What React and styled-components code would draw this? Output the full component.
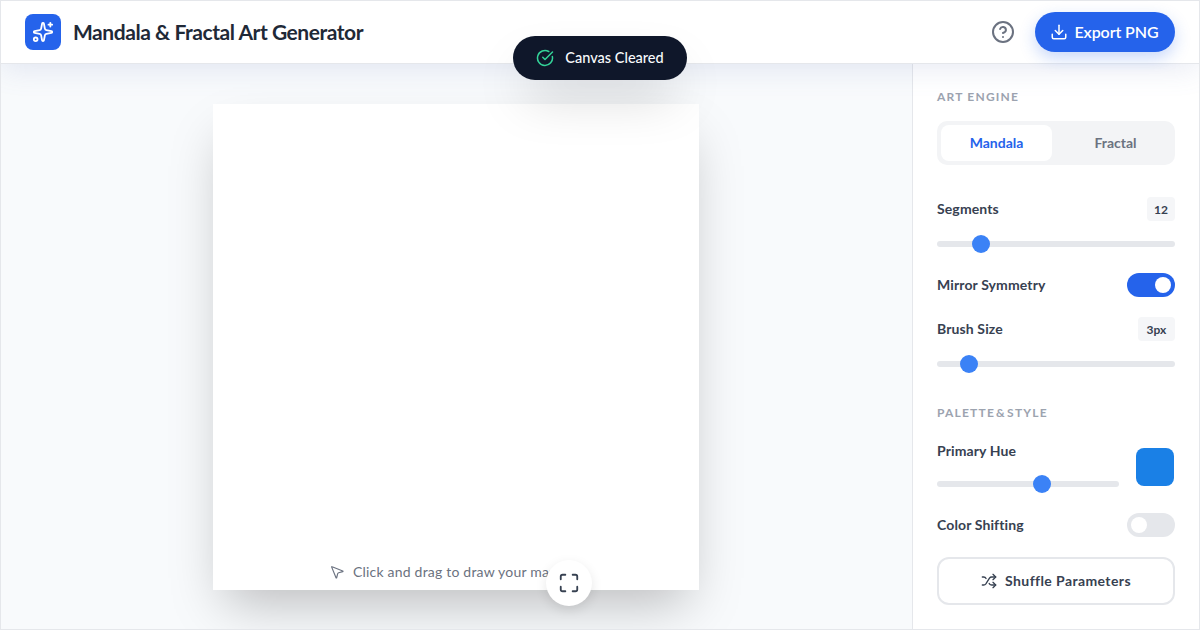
import React from 'react'
import styled, { createGlobalStyle } from 'styled-components'
import { Sparkles, CircleHelp, Download, CircleCheckBig, MousePointer2, Maximize, Shuffle } from 'lucide-react'

const Global = createGlobalStyle`
  * { box-sizing: border-box; }
  html, body { margin: 0; padding: 0; }
  body { font-family: "Lato", "Noto Sans", sans-serif; background: #f8fafc; }
`

function Slider({ at }) {
  return (
    <Track>
      <Thumb $at={at} />
    </Track>
  )
}

function App() {
  return (
    <Page>
      <Global />
      <Header>
        <Brand>
          <LogoMark><Sparkles size={22} strokeWidth={2} /></LogoMark>
          <Title>Mandala &amp; Fractal Art Generator</Title>
        </Brand>
        <Actions>
          <HelpButton><CircleHelp size={24} strokeWidth={2} /></HelpButton>
          <ExportButton><Download size={18} strokeWidth={2} /><ButtonText>Export PNG</ButtonText></ExportButton>
        </Actions>
      </Header>

      <Toast>
        <CircleCheckBig size={18} strokeWidth={2} color="#34d399" />
        <ButtonText>Canvas Cleared</ButtonText>
      </Toast>

      <Body>
        <Stage>
          <Canvas>
            <Hint><MousePointer2 size={16} strokeWidth={1.75} />Click and drag to draw your mandala</Hint>
            <ExpandButton><Maximize size={22} strokeWidth={2} /></ExpandButton>
          </Canvas>
        </Stage>

        <Panel>
          <SectionLabel>ART ENGINE</SectionLabel>
          <Tabs>
            <Tab $active>Mandala</Tab>
            <Tab>Fractal</Tab>
          </Tabs>

          <Row $top={32}>
            <Label>Segments</Label>
            <Badge $w={28}>12</Badge>
          </Row>
          <SliderWrap $top={20}><Slider at={44} /></SliderWrap>

          <Row $top={26}>
            <Label>Mirror Symmetry</Label>
            <Toggle $on><Knob $on /></Toggle>
          </Row>

          <Row $top={20}>
            <Label>Brush Size</Label>
            <Badge $w={37}>3px</Badge>
          </Row>
          <SliderWrap $top={20}><Slider at={32} /></SliderWrap>

          <SectionLabel $top={38} $tight>PALETTE &amp; STYLE</SectionLabel>

          <HueRow>
            <HueControls>
              <Label>Primary Hue</Label>
              <Slider at={105} />
            </HueControls>
            <Swatch />
          </HueRow>

          <Row $top={26}>
            <Label>Color Shifting</Label>
            <Toggle><Knob /></Toggle>
          </Row>

          <ShuffleButton><Shuffle size={16} strokeWidth={2} /><ButtonText>Shuffle Parameters</ButtonText></ShuffleButton>
        </Panel>
      </Body>
    </Page>
  )
}

export default App

const Page = styled.div`
  position: relative;
  width: 1200px;
  height: 630px;
  overflow: hidden;
  display: flex;
  flex-direction: column;
  background: #f8fafc;
  border: 1px solid #e5e7eb;
`

const Header = styled.header`
  position: relative;
  z-index: 2;
  height: 63px;
  flex: none;
  display: flex;
  align-items: center;
  justify-content: space-between;
  padding: 0 24px;
  background: #fff;
  border-bottom: 1px solid #e5e7eb;
  box-shadow: 0 4px 30px rgba(100, 116, 180, 0.16);
`

const Brand = styled.div`
  display: flex;
  align-items: center;
  gap: 12px;
`

const LogoMark = styled.div`
  width: 36px;
  height: 36px;
  border-radius: 8px;
  background: #2563eb;
  color: #fff;
  display: flex;
  align-items: center;
  justify-content: center;
`

const Title = styled.h1`
  margin: 0 0 2px;
  font-size: 21px;
  font-weight: 700;
  color: #1f2937;
  letter-spacing: -0.45px;
`

const Actions = styled.div`
  display: flex;
  align-items: center;
  gap: 10px;
`

const HelpButton = styled.div`
  width: 44px;
  height: 44px;
  display: flex;
  align-items: center;
  justify-content: center;
  color: #6b7280;
`

const ButtonText = styled.span`
  margin-bottom: 2px;
`

const ExportButton = styled.div`
  height: 40px;
  width: 140px;
  padding-right: 2px;
  border-radius: 20px;
  background: #2563eb;
  color: #fff;
  font-size: 16px;
  font-weight: 600;
  letter-spacing: -0.1px;
  display: flex;
  align-items: center;
  justify-content: center;
  gap: 7px;
  box-shadow: 0 6px 16px rgba(37, 99, 235, 0.25);
`

const Toast = styled.div`
  position: absolute;
  z-index: 5;
  top: 35px;
  left: 512px;
  width: 174px;
  height: 44px;
  border-radius: 22px;
  background: #0f172a;
  color: #f8fafc;
  font-size: 14.5px;
  font-weight: 500;
  display: flex;
  align-items: center;
  justify-content: center;
  gap: 11px;
  box-shadow: 0 25px 50px -12px rgba(0, 0, 0, 0.25);
`

const Body = styled.div`
  flex: 1;
  min-height: 0;
  display: flex;
`

const Stage = styled.main`
  flex: 1;
  display: flex;
  align-items: center;
  justify-content: center;
`

const Canvas = styled.div`
  position: relative;
  width: 486px;
  height: 486px;
  margin: 1px 1px 0 0;
  background: #fff;
  box-shadow: 0 25px 50px -12px rgba(0, 0, 0, 0.25);
`

const Hint = styled.div`
  position: absolute;
  left: 116px;
  bottom: 10px;
  display: flex;
  align-items: center;
  gap: 8px;
  white-space: nowrap;
  font-size: 14px;
  letter-spacing: 0.2px;
  color: #6b7280;
`

const ExpandButton = styled.div`
  position: absolute;
  left: 333px;
  top: 456px;
  width: 46px;
  height: 46px;
  border-radius: 50%;
  background: #fff;
  color: #374151;
  display: flex;
  align-items: center;
  justify-content: center;
  box-shadow: 0 4px 12px rgba(0, 0, 0, 0.1);
`

const Panel = styled.aside`
  width: 287px;
  flex: none;
  padding: 25px 24px 0;
  background: #fff;
  border-left: 1px solid #e5e7eb;
`

const SectionLabel = styled.div`
  margin-top: ${(p) => p.$top || 0}px;
  font-size: 12px;
  line-height: 16px;
  font-weight: 700;
  letter-spacing: 1.2px;
  word-spacing: ${(p) => (p.$tight ? '-3px' : '0')};
  color: #9ca3af;
`

const Tabs = styled.div`
  margin-top: 16px;
  height: 44px;
  padding: 4px;
  border-radius: 10px;
  background: #f3f4f6;
  display: grid;
  grid-template-columns: 1fr 1fr;
  gap: 8px;
`

const Tab = styled.div`
  border-radius: 8px;
  padding-bottom: 1px;
  display: flex;
  align-items: center;
  justify-content: center;
  font-size: 14px;
  font-weight: 700;
  background: ${(p) => (p.$active ? '#fff' : 'transparent')};
  color: ${(p) => (p.$active ? '#2563eb' : '#6b7280')};
`

const Row = styled.div`
  margin-top: ${(p) => p.$top || 0}px;
  height: 24px;
  display: flex;
  align-items: center;
  justify-content: space-between;
`

const Label = styled.div`
  font-size: 14px;
  line-height: 20px;
  font-weight: 700;
  letter-spacing: 0.12px;
  color: #374151;
`

const Badge = styled.div`
  width: ${(p) => p.$w}px;
  height: 24px;
  border-radius: 4px;
  background: #f5f6f8;
  display: flex;
  align-items: center;
  justify-content: center;
  font-size: 12px;
  font-weight: 700;
  color: #374151;
`

const SliderWrap = styled.div`
  margin-top: ${(p) => p.$top}px;
`

const Track = styled.div`
  position: relative;
  height: 6px;
  border-radius: 3px;
  background: #e5e7eb;
`

const Thumb = styled.div`
  position: absolute;
  top: -6px;
  left: ${(p) => p.$at - 9}px;
  width: 18px;
  height: 18px;
  border-radius: 50%;
  background: #3b82f6;
`

const Toggle = styled.div`
  width: 48px;
  height: 24px;
  border-radius: 12px;
  padding: 4px;
  display: flex;
  justify-content: ${(p) => (p.$on ? 'flex-end' : 'flex-start')};
  background: ${(p) => (p.$on ? '#2563eb' : '#e5e7eb')};
`

const Knob = styled.div`
  width: 16px;
  height: 16px;
  border-radius: 50%;
  background: #fff;
`

const HueRow = styled.div`
  margin-top: 20px;
  display: flex;
  align-items: flex-end;
  gap: 17px;
`

const HueControls = styled.div`
  flex: 1;
  display: flex;
  flex-direction: column;
  gap: 20px;
`

const Swatch = styled.div`
  width: 38px;
  height: 38px;
  flex: none;
  margin: 0 1px 1px 0;
  border-radius: 8px;
  background: #1a80e6;
`

const ShuffleButton = styled.div`
  margin-top: 20px;
  height: 48px;
  border: 2px solid #e5e7eb;
  border-radius: 12px;
  background: #fff;
  display: flex;
  align-items: center;
  justify-content: center;
  gap: 8px;
  font-size: 14px;
  font-weight: 700;
  letter-spacing: 0.4px;
  color: #374151;
`
